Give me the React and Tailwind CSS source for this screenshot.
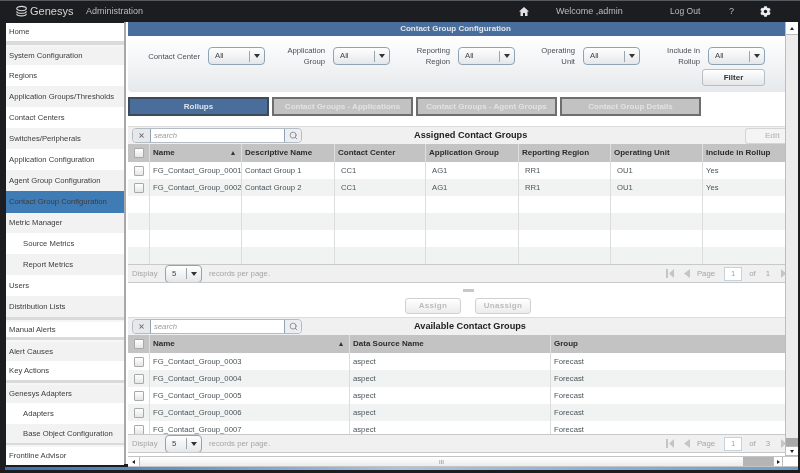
import { FaCog } from "react-icons/fa";
import { Search, X } from "lucide-react";

const navRows = [
  { label: "Home", h: "h-[18px]", bg: "bg-white" },
  { sep: true, h: "h-[6px]" },
  { label: "System Configuration", h: "h-[18px]", bg: "bg-[#f2f2f2]" },
  { label: "Regions", h: "h-[21px]", bg: "bg-white" },
  { label: "Application Groups/Thresholds", h: "h-[21px]", bg: "bg-[#f2f2f2]" },
  { label: "Contact Centers", h: "h-[21px]", bg: "bg-white" },
  { label: "Switches/Peripherals", h: "h-[21px]", bg: "bg-[#f2f2f2]" },
  { label: "Application Configuration", h: "h-[21px]", bg: "bg-white" },
  { label: "Agent Group Configuration", h: "h-[21px]", bg: "bg-[#f2f2f2]" },
  { label: "Contact Group Configuration", h: "h-[22px]", bg: "bg-[#3f7cb5]" },
  { label: "Metric Manager", h: "h-[20px]", bg: "bg-[#f2f2f2]" },
  { label: "Source Metrics", h: "h-[21px]", bg: "bg-white", sub: true },
  { label: "Report Metrics", h: "h-[21px]", bg: "bg-[#f2f2f2]", sub: true },
  { label: "Users", h: "h-[21px]", bg: "bg-white" },
  { label: "Distribution Lists", h: "h-[21px]", bg: "bg-[#f2f2f2]" },
  { sep: true, h: "h-[5px]" },
  { label: "Manual Alerts", h: "h-[15px]", bg: "bg-white" },
  { sep: true, h: "h-[5px]" },
  { label: "Alert Causes", h: "h-[19px]", bg: "bg-[#f2f2f2]" },
  { label: "Key Actions", h: "h-[19px]", bg: "bg-white" },
  { sep: true, h: "h-[5px]" },
  { label: "Genesys Adapters", h: "h-[18px]", bg: "bg-[#f2f2f2]" },
  { label: "Adapters", h: "h-[21px]", bg: "bg-white", sub: true },
  { label: "Base Object Configuration", h: "h-[19px]", bg: "bg-[#f2f2f2]", sub: true },
  { sep: true, h: "h-[4px]" },
  { label: "Frontline Advisor", h: "h-[18px]", bg: "bg-white" },
];

const assignedCols = [
  { label: "Name", w: "w-[92px]", sort: true, key: "name", cell: "pl-[3px]" },
  { label: "Descriptive Name", w: "w-[93px]", key: "desc", cell: "pl-[3px]" },
  { label: "Contact Center", w: "w-[91px]", key: "cc", cell: "pl-[6px]" },
  { label: "Application Group", w: "w-[93px]", key: "ag", cell: "pl-[6px]" },
  { label: "Reporting Region", w: "w-[92px]", key: "rr", cell: "pl-[6px]" },
  { label: "Operating Unit", w: "w-[92px]", key: "ou", cell: "pl-[6px]" },
  { label: "Include in Rollup", w: "w-[81px]", key: "inc", cell: "pl-[3px]" },
];

const assignedRows = [
  { name: "FG_Contact_Group_0001", desc: "Contact Group 1", cc: "CC1", ag: "AG1", rr: "RR1", ou: "OU1", inc: "Yes" },
  { name: "FG_Contact_Group_0002", desc: "Contact Group 2", cc: "CC1", ag: "AG1", rr: "RR1", ou: "OU1", inc: "Yes" },
  {}, {}, {}, {},
];

const availableCols = [
  { label: "Name", w: "w-[200px]", sort: true, key: "name", cell: "pl-[3px]" },
  { label: "Data Source Name", w: "w-[201px]", key: "src", cell: "pl-[3px]" },
  { label: "Group", w: "w-[233px]", key: "group", cell: "pl-[3px]" },
];

const availableRows = ["0003", "0004", "0005", "0006", "0007"].map(n => ({
  name: `FG_Contact_Group_${n}`, src: "aspect", group: "Forecast",
}));

const filters = [
  { label: ["Contact Center"] },
  { label: ["Application", "Group"] },
  { label: ["Reporting", "Region"] },
  { label: ["Operating", "Unit"] },
  { label: ["Include in", "Rollup"] },
];

const tabs = ["Contact Groups - Applications", "Contact Groups - Agent Groups", "Contact Group Details"];

function Dropdown({ value, width = "w-[57px]", split = "w-[15px]" }) {
  return (
    <div className={`${width} h-[18px] flex items-center rounded-[4px] border border-[#8fa3b5] bg-gradient-to-b from-white to-[#e4e7ea] text-[7.7px] text-[#444]`}>
      <span className="flex-1 pl-[6px]">{value}</span>
      <span className={`${split} h-[11px] flex items-center justify-center border-l border-[#9aa5ae]`}>
        <span className="border-x-[3px] border-t-[4px] border-x-transparent border-t-[#333]" />
      </span>
    </div>
  );
}

function Logo() {
  return (
    <svg width="13" height="14" viewBox="0 0 15 15" fill="none" stroke="#d8d8d8" strokeWidth="1.3">
      <ellipse cx="7.5" cy="3.5" rx="5.5" ry="2.5" />
      <path d="M2 6.5c0 1.5 2.5 2.5 5.5 2.5S13 8 13 6.5" />
      <path d="M2 9.5C2 11 4.500 12 7.500 12S13 11 13 9.500" />
    </svg>
  );
}

function Toolbar({ title, edit }) {
  return (
    <div className="h-[18px] flex items-center pl-[4px] bg-[#f0f0f0] border-t border-[#dcdcdc]">
      <div className="w-[170px] h-[15px] flex items-center rounded-[4px] border border-[#b3bcc4] bg-white">
        <span className="w-[18px] h-full flex items-center justify-center bg-[#e6e8ea] border-r border-[#8fa3b5] rounded-l-[4px]">
          <X size={7} strokeWidth={3.500} color="#667" />
        </span>
        <span className="flex-1 pl-[3px] text-[7.7px] italic text-[#9a9a9a]">search</span>
        <span className="w-[17px] h-full flex items-center justify-center bg-[#eceeef] border-l border-[#8fa3b5] rounded-r-[4px]">
          <Search size={9} strokeWidth={2} color="#778" />
        </span>
      </div>
      <span className="ml-[112px] text-[9.2px] font-bold text-[#222] whitespace-nowrap">{title}</span>
      {edit && (
        <span className="ml-auto w-[40px] h-[16px] flex items-center justify-end pr-[5px] rounded-l-[3px] border border-r-0 border-[#d5d5d5] bg-[#f4f4f4] text-[8px] font-bold text-[#c4c4c4]">Edit</span>
      )}
    </div>
  );
}

function CheckBox() {
  return <span className="w-[10px] h-[10px] block rounded-[1px] border border-[#a9a9a9] bg-gradient-to-b from-white to-[#e6e6e6]" />;
}

function DataGrid({ cols, rows, bodyHeight }) {
  return (
    <div>
      <div className="h-[18px] flex bg-[#c3c3c3] text-[8px] font-bold text-[#2c2c2c]">
        <div className="w-[22px] flex items-center justify-center border-r border-[#dedede]"><CheckBox /></div>
        {cols.map(c => (
          <div key={c.label} className={`${c.w} flex items-center justify-between px-[3px] border-r border-[#dedede] last:border-r-0 whitespace-nowrap`}>
            <span>{c.label}</span>
            {c.sort && <span className="mr-[3px] border-x-[2.5px] border-b-[4px] border-x-transparent border-b-[#333]" />}
          </div>
        ))}
      </div>
      <div className={`${bodyHeight} overflow-hidden`}>
        {rows.map((r, i) => (
          <div key={i} className={`h-[17px] flex text-[7.7px] text-[#49555a] ${i % 2 ? "bg-[#f1f3f3]" : "bg-white"}`}>
            <div className="w-[22px] flex items-center justify-center border-r border-[#dcdcdc]">{r.name && <CheckBox />}</div>
            {cols.map(c => (
              <div key={c.label} className={`${c.w} ${c.cell} flex items-center border-r border-[#dcdcdc] last:border-r-0 whitespace-nowrap overflow-hidden`}>
                {r[c.key]}
              </div>
            ))}
          </div>
        ))}
      </div>
    </div>
  );
}

function GridFooter({ total }) {
  return (
    <div className="h-[19px] flex items-center pl-[4px] bg-[#f0f0f0] border-y border-[#c9c9c9] text-[7.8px] text-[#a5a5a5] overflow-hidden">
      <span className="w-[33px]">Display</span>
      <Dropdown value="5" width="w-[37px]" split="w-[15px]" />
      <span className="ml-[7px]">records per page.</span>
      <div className="ml-auto flex items-center">
        <svg width="8" height="9" viewBox="0 0 8 9" fill="#c2c6c8"><rect x="0" y="0" width="2" height="9" /><path d="M8 0v9L3 4.500z" /></svg>
        <svg className="ml-[10px]" width="6" height="9" viewBox="0 0 6 9" fill="#c2c6c8"><path d="M6 0v9L0 4.500z" /></svg>
        <span className="ml-[7px]">Page</span>
        <span className="ml-[9px] w-[18px] h-[14px] flex items-center justify-center bg-white border border-[#c5d3de]">1</span>
        <span className="ml-[7px]">of</span>
        <span className="ml-[10px]">{total}</span>
        <svg className="ml-[11px] -mr-[1px]" width="5" height="9" viewBox="0 0 5 9" fill="#c2c6c8"><path d="M0 0v9l5-4.500z" /></svg>
      </div>
    </div>
  );
}

function SmallButton({ children }) {
  return (
    <span className="w-[56px] h-[16px] flex items-center justify-center rounded-[3px] border border-[#d0d0d0] bg-gradient-to-b from-white to-[#ececec] text-[8px] font-bold tracking-[0.3px] text-[#bcbcbc]">
      {children}
    </span>
  );
}

export default function App() {
  return (
    <div className="w-[800px] h-[473px] flex flex-col overflow-hidden bg-[#1b1d21] border-t border-[#555a60] font-['Liberation_Sans',Arial,sans-serif] blur-[0.35px]">
      {/* top bar */}
      <div className="h-[21px] shrink-0 flex items-center pl-[15px] text-[#b9bcbf]">
        <Logo />
        <span className="ml-[2px] w-[45px] text-[11px] text-[#d5d5d5]">Genesys</span>
        <span className="ml-[11px] w-[56px] text-[9px] whitespace-nowrap">Administration</span>
        <svg className="ml-[377px]" width="10" height="9" viewBox="0 0 10 9" fill="#e0e0e0"><path d="M5 0L0 4.500h1.500V9h2.500V6h2v3h2.500V4.500H10z" /></svg>
        <span className="ml-[27px] w-[114px] text-[9px]">Welcome ,admin</span>
        <span className="w-[59px] text-[8.5px]">Log Out</span>
        <span className="w-[31px] text-[9px]">?</span>
        <FaCog size={11} color="#eee" />
      </div>

      <div className="flex-1 min-h-0 flex pl-[6px] pr-[2px]">
        {/* side nav */}
        <div className="w-[118px] shrink-0 flex flex-col pt-[1px]">
          {navRows.map((r, i) =>
            r.sep ? (
              <div key={i} className={`${r.h} bg-[#dadada] border-b-2 border-[#f6f6f6]`} />
            ) : (
              <div key={i} className={`${r.h} ${r.bg} flex items-center text-[7.7px] text-[#3c3c3c] whitespace-nowrap ${r.sub ? "pl-[17px]" : "pl-[3px]"}`}>
                {r.label}
              </div>
            )
          )}
        </div>
        <div className="w-[4px] shrink-0 mb-[3px] bg-white border-l-2 border-[#a8a8a8]" />

        {/* right side */}
        <div className="flex-1 min-w-0 flex flex-col bg-white">
          <div className="flex-1 min-h-0 flex">
            <div className="w-[657px] shrink-0 flex flex-col overflow-hidden">
              <div className="h-[14px] shrink-0 flex items-center justify-center bg-[#4a6e9b] text-[8px] font-bold text-[#dfe6ee]">
                <span className="ml-[-2px]">Contact Group Configuration</span>
              </div>

              {/* filter panel */}
              <div className="h-[56px] shrink-0 pt-[9px] pl-[12px] pr-[20px] rounded-bl-[4px] bg-gradient-to-b from-white to-[#e6e9ec]">
                <div className="flex">
                  {filters.map((f, i) => (
                    <div key={i} className="w-[125px] flex items-center justify-end gap-[8px]">
                      <div className="text-right text-[7.7px] leading-[11px] text-[#4a4f55] whitespace-nowrap">
                        {f.label.map(t => <div key={t}>{t}</div>)}
                      </div>
                      <Dropdown value="All" />
                    </div>
                  ))}
                </div>
                <div className="mt-[2px] flex justify-end">
                  <span className="w-[63px] h-[17px] flex items-center justify-center rounded-[3px] border border-[#b6bdc4] bg-gradient-to-b from-white to-[#e4e6e8] text-[8px] font-bold text-[#333]">Filter</span>
                </div>
              </div>

              {/* tabs */}
              <div className="mt-[5px] h-[19px] shrink-0 flex gap-[3px]">
                <span className="w-[141px] flex items-center justify-center bg-[#4a6e9b] border-2 border-[#3e4a58] text-[8px] font-bold text-[#dbe3ec]">Rollups</span>
                {tabs.map(t => (
                  <span key={t} className="w-[141px] flex items-center justify-center bg-[#c2c2c2] border-2 border-[#6e6e6e] text-[8px] font-bold text-[#e2e2e2] whitespace-nowrap">{t}</span>
                ))}
              </div>

              <div className="mt-[10px] shrink-0">
                <Toolbar title="Assigned Contact Groups" edit />
                <DataGrid cols={assignedCols} rows={assignedRows} bodyHeight="h-[102px]" />
                <GridFooter total="1" />
              </div>

              {/* assign buttons */}
              <div className="h-[34px] shrink-0 flex flex-col items-center">
                <span className="mt-[6px] ml-[24px] w-[11px] h-[3px] bg-[#c8c8c8]" />
                <div className="mt-[6px] flex gap-[14px] ml-[23px]">
                  <SmallButton>Assign</SmallButton>
                  <SmallButton>Unassign</SmallButton>
                </div>
              </div>

              <div className="shrink-0">
                <Toolbar title="Available Contact Groups" />
                <DataGrid cols={availableCols} rows={availableRows} bodyHeight="h-[81px]" />
                <GridFooter total="3" />
              </div>
            </div>

            {/* vertical scrollbar */}
            <div className="w-[13px] shrink-0 flex flex-col bg-[#ececec] border-l border-[#bdbdbd]">
              <span className="h-[13px] flex items-center justify-center bg-white border-b border-[#bbb]">
                <span className="border-x-[2.5px] border-b-[3px] border-x-transparent border-b-[#222]" />
              </span>
              <span className="flex-1" />
              <span className="h-[8px] bg-[#a9a9a9]" />
              <span className="h-[10px] flex items-center justify-center bg-white border-y border-[#bbb]">
                <span className="border-x-[2.5px] border-t-[3px] border-x-transparent border-t-[#222]" />
              </span>
            </div>
          </div>

          {/* horizontal scrollbar */}
          <div className="h-[11px] shrink-0 flex border-y border-[#c4c4c4] bg-white">
            <span className="w-[12px] flex items-center justify-center border-r border-[#bbb]">
              <span className="border-y-[2.5px] border-r-[3px] border-y-transparent border-r-[#222]" />
            </span>
            <span className="flex-1 flex items-center justify-center bg-gradient-to-b from-white to-[#ececec] text-[6px] leading-none text-[#888]">III</span>
            <span className="w-[30px] bg-[#b5b5b5]" />
            <span className="w-[10px] flex items-center justify-center border-x border-[#bbb]">
              <span className="border-y-[2.5px] border-l-[3px] border-y-transparent border-l-[#222]" />
            </span>
            <span className="w-[15px]" />
          </div>
        </div>
      </div>

      {/* window edge */}
      <div className="h-[3px] shrink-0 ml-[5px] mr-[2px] bg-gradient-to-r from-[#3c6ea8] via-[#a9c4de] to-[#6f9cc8]" />
      <div className="h-[3px] shrink-0" />
    </div>
  );
}
